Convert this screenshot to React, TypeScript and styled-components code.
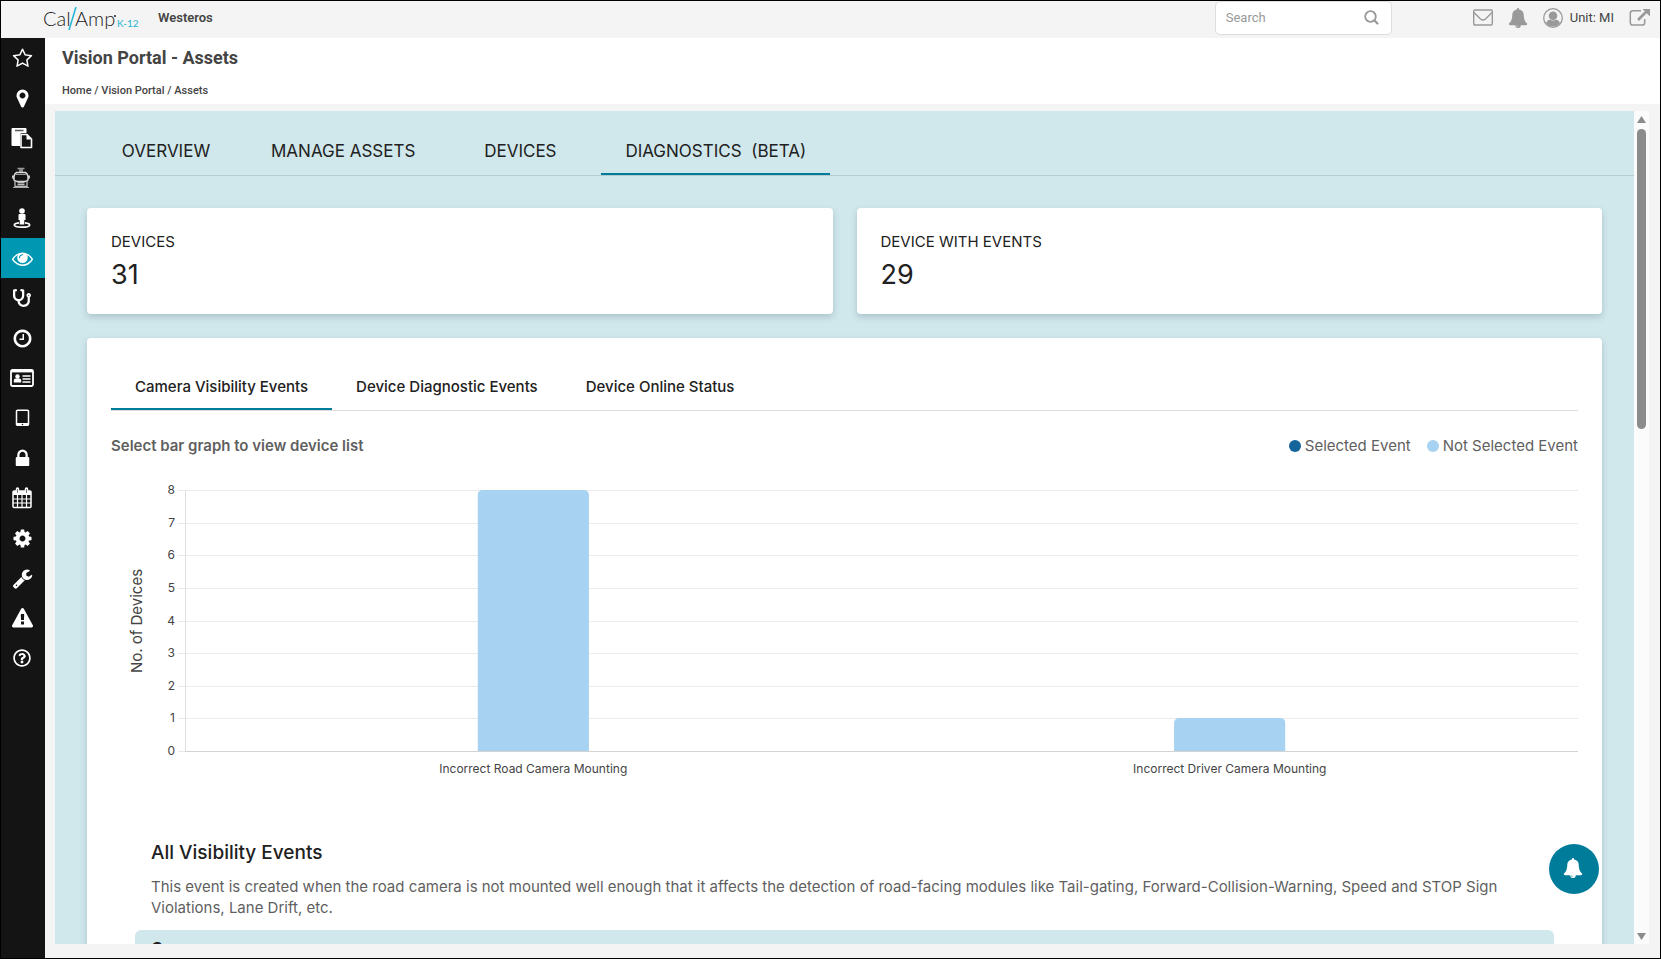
import React, { ReactNode } from "react";
import styled, { createGlobalStyle } from "styled-components";
import { FaStethoscope, FaRegQuestionCircle } from "react-icons/fa";

const GlobalStyle = createGlobalStyle`
  *, *::before, *::after { box-sizing: border-box; }
  body { margin: 0; background: #f4f4f4; font-family: Inter, "Liberation Sans", sans-serif; color: #212121; }
  h1, h2, h3, p, ul, ol, dl, dd { margin: 0; padding: 0; }
  ul, ol { list-style: none; }
  button, input { font: inherit; color: inherit; }
  a { color: inherit; text-decoration: none; }
`;

const Shell = styled.div`
  display: flex;
  flex-direction: column;
  height: 100vh;
  border: 1px solid #000;
  background: #f4f4f4;
`;

const TopBar = styled.header`
  display: flex;
  align-items: center;
  flex: none;
  height: 37px;
  padding: 0 9px 4px 42px;
  font-family: Roboto, "Liberation Sans", sans-serif;
  font-size: 13px;
  color: #444;
`;

const LogoLink = styled.a`
  display: flex;
  height: 30px;
`;

const OrgName = styled.span`
  margin-left: 18px;
  font-weight: 600;
`;

const SearchBox = styled.label`
  display: flex;
  align-items: center;
  width: 177px;
  height: 34px;
  margin-left: auto;
  padding: 0 12px 0 10px;
  border: 1px solid #ddd;
  border-radius: 5px;
  background: #fff;
  color: #999;
`;

const SearchInput = styled.input`
  flex: 1;
  min-width: 0;
  padding: 0;
  border: 0;
  outline: 0;
  background: none;
  &::placeholder { color: #999; opacity: 1; }
`;

const TopActions = styled.nav`
  display: flex;
  align-items: center;
  margin-left: 81px;
  gap: 15px;
`;

const IconButton = styled.button`
  display: flex;
  align-items: center;
  gap: 7px;
  padding: 0;
  border: 0;
  background: none;
  color: #444;
  cursor: pointer;
  svg { color: #999; }
`;

const Body = styled.div`
  display: flex;
  flex: 1;
  min-height: 0;
`;

const Sidebar = styled.nav`
  flex: none;
  width: 44px;
  background: #141414;
`;

const SideLink = styled.a<{ $active?: boolean }>`
  display: flex;
  align-items: center;
  justify-content: center;
  height: 40px;
  padding-right: 2px;
  background: ${(p) => (p.$active ? "#0097b2" : "transparent")};
  color: #fff;
`;

const Page = styled.div`
  display: flex;
  flex-direction: column;
  flex: 1;
  min-width: 0;
`;

const PageHeader = styled.div`
  flex: none;
  height: 66px;
  padding: 9px 17px 0;
  background: #fff;
  font-family: Roboto, "Liberation Sans", sans-serif;
  color: #444;
`;

const PageTitle = styled.h1`
  font-size: 18px;
  line-height: 22px;
  font-weight: 700;
`;

const Breadcrumb = styled.nav`
  margin-top: 14px;
  font-size: 11px;
  line-height: 16px;
  font-weight: 500;
`;

const Frame = styled.div`
  position: relative;
  display: flex;
  flex: 1;
  min-height: 0;
  margin: 7px 11px 14px 10px;
`;

const Content = styled.main`
  flex: 1;
  min-width: 0;
  overflow: hidden;
  background: #d0e7eb;
`;

const TabList = styled.div<{ $main?: boolean }>`
  display: flex;
  gap: ${(p) => (p.$main ? "1px" : "0")};
  padding: ${(p) => (p.$main ? "15px 31px 0" : "0")};
  border-bottom: 1px solid ${(p) => (p.$main ? "#b7cbcf" : "#dedede")};
`;

const Tab = styled.button<{ $main?: boolean; $active?: boolean }>`
  min-width: ${(p) => (p.$main ? "160px" : "90px")};
  height: ${(p) => (p.$main ? "49px" : "48px")};
  padding: 2px 24px 0;
  border: 0;
  border-bottom: 2px solid ${(p) => (p.$active ? "#007c9b" : "transparent")};
  background: none;
  font-size: ${(p) => (p.$main ? "17px" : "15px")};
  font-weight: ${(p) => (p.$main ? 400 : 500)};
  white-space: pre;
  color: #212121;
  cursor: pointer;
`;

const Sections = styled.div`
  display: grid;
  gap: 24px;
  padding: 32px;
`;

const StatRow = styled.dl`
  display: grid;
  grid-template-columns: 1fr 1fr;
  gap: 24px;
`;

const Card = styled.div`
  padding: 24px;
  border-radius: 4px;
  background: #fff;
  box-shadow: 0 3px 6px rgba(60, 90, 110, 0.25);
`;

const StatCard = styled(Card)`
  height: 106px;
`;

const StatLabel = styled.dt`
  font-size: 15px;
  line-height: 20px;
`;

const StatValue = styled.dd`
  margin-top: 5px;
  font-size: 27px;
  line-height: 36px;
  font-weight: 400;
`;

const ChartHeader = styled.div`
  display: flex;
  align-items: center;
  justify-content: space-between;
  margin-top: 24px;
  font-size: 15px;
  line-height: 22px;
  color: #5f5f5f;
`;

const ChartTitle = styled.h2`
  font-size: 15px;
  font-weight: 600;
`;

const Legend = styled.ul`
  display: flex;
  gap: 16px;
`;

const LegendItem = styled.li<{ $color: string }>`
  display: flex;
  align-items: center;
  gap: 4px;
  &::before {
    content: "";
    width: 12px;
    height: 12px;
    border-radius: 50%;
    background: ${(p) => p.$color};
  }
`;

const ChartRow = styled.div`
  display: flex;
  height: 310px;
  margin-top: 23px;
`;

const AxisArea = styled.svg`
  flex: none;
  width: 74px;
  height: 100%;
  overflow: visible;
`;

const PlotArea = styled.svg`
  flex: 1;
  min-width: 0;
  height: 100%;
  overflow: visible;
`;

const EventList = styled.section`
  margin: 51px 24px 0;
`;

const EventIntro = styled.div`
  padding: 0 16px;
`;

const EventTitle = styled.h2`
  font-size: 19px;
  line-height: 24px;
  font-weight: 500;
`;

const EventText = styled.p`
  margin-top: 11px;
  font-size: 15px;
  line-height: 21px;
  color: #5f5f5f;
`;

const EventTable = styled.table`
  width: 100%;
  margin-top: 12px;
  border-collapse: separate;
  border-spacing: 0;
`;

const EventHead = styled.th`
  height: 36px;
  padding: 8px 16px;
  border-radius: 6px 6px 0 0;
  background: #d0e7eb;
  text-align: left;
  font-size: 16px;
  line-height: 20px;
  font-weight: 700;
`;

const ScrollTrack = styled.div`
  display: flex;
  flex-direction: column;
  align-items: center;
  flex: none;
  width: 15px;
  padding: 5px 0 4px;
  background: #fbfbfb;
  color: #8b8b8b;
`;

const ScrollThumb = styled.div`
  width: 9px;
  height: 300px;
  margin: 6px 0 auto;
  border-radius: 5px;
  background: #8b8b8b;
`;

const AlertButton = styled.button`
  position: absolute;
  right: 50px;
  bottom: 50px;
  display: flex;
  align-items: center;
  justify-content: center;
  width: 50px;
  height: 50px;
  padding: 0 2px 2px 0;
  border: 0;
  border-radius: 50%;
  background: #007c9b;
  color: #fff;
  cursor: pointer;
`;

const Glyph = ({ d, size = 21 }: { d: string; size?: number }) => (
  <svg width={size} height={size} viewBox="0 0 1792 1792" fill="currentColor" aria-hidden="true">
    <path d={d} />
  </svg>
);

const paths = {
  star: "M1201 1004l306-297-422-62-189-382-189 382-422 62 306 297-73 421 378-199 377 199zm527-357q0 22-26 48l-363 354 86 500q1 7 1 20 0 50-41 50-19 0-40-12l-449-236-449 236q-22 12-40 12-21 0-31.5-14.5t-10.5-35.5q0-6 2-20l86-500-364-354q-25-27-25-48 0-37 56-46l502-73 225-455q19-41 49-41t49 41l225 455 502 73q56 9 56 46z",
  marker: "M1152 640q0-106-75-181t-181-75-181 75-75 181 75 181 181 75 181-75 75-181zm256 0q0 109-33 179l-364 774q-16 33-47.5 52t-67.5 19-67.5-19-46.5-52l-365-774q-33-70-33-179 0-212 150-362t362-150 362 150 150 362z",
  eye: "M1664 960q-152-236-381-353 61 104 61 225 0 185-131.5 316.5t-316.5 131.5-316.5-131.5-131.5-316.5q0-121 61-225-229 117-381 353 133 205 333.5 326.5t434.5 121.5 434.5-121.5 333.5-326.5zm-720-384q0-20-14-34t-34-14q-125 0-214.5 89.5t-89.5 214.5q0 20 14 34t34 14 34-14 14-34q0-86 61-147t147-61q20 0 34-14t14-34zm848 384q0 34-20 69-140 230-376.5 368.5t-499.5 138.5-499.5-139-376.5-368q-20-35-20-69t20-69q140-229 376.5-368t499.5-139 499.5 139 376.5 368q20 35 20 69z",
  clock: "M1024 544v448q0 14-9 23t-23 9h-320q-14 0-23-9t-9-23v-64q0-14 9-23t23-9h224v-352q0-14 9-23t23-9h64q14 0 23 9t9 23zm416 352q0-148-73-273t-198-198-273-73-273 73-198 198-73 273 73 273 198 198 273 73 273-73 198-198 73-273zm224 0q0 209-103 385.5t-279.5 279.5-385.5 103-385.5-103-279.5-279.5-103-385.5 103-385.5 279.5-279.5 385.5-103 385.5 103 279.5 279.5 103 385.5z",
  tablet: "M960 1408q0-26-19-45t-45-19-45 19-19 45 19 45 45 19 45-19 19-45zm384-160v-960q0-13-9.5-22.5t-22.5-9.5h-832q-13 0-22.5 9.5t-9.5 22.5v960q0 13 9.500 22.500t22.500 9.500h832q13 0 22.500-9.500t9.500-22.500zm128-960v1088q0 66-47 113t-113 47h-832q-66 0-113-47t-47-113v-1088q0-66 47-113t113-47h832q66 0 113 47t47 113z",
  lock: "M640 768h512v-192q0-106-75-181t-181-75-181 75-75 181v192zm832 96v576q0 40-28 68t-68 28h-960q-40 0-68-28t-28-68v-576q0-40 28-68t68-28h32v-192q0-184 132-316t316-132 316 132 132 316v192h32q40 0 68 28t28 68z",
  cog: "M1152 896q0-106-75-181t-181-75-181 75-75 181 75 181 181 75 181-75 75-181zm512-109v222q0 12-8 23t-20 13l-185 28q-19 54-39 91 35 50 107 138 10 12 10 25t-9 23q-27 37-99 108t-94 71q-12 0-26-9l-138-108q-44 23-91 38-16 136-29 186-7 28-36 28h-222q-14 0-24.5-8.5t-11.5-21.5l-28-184q-49-16-90-37l-141 107q-10 9-25 9-14 0-25-11-126-114-165-168-7-10-7-23 0-12 8-23 15-21 51-66.5t54-70.5q-27-50-41-99l-183-27q-13-2-21-12.5t-8-23.5v-222q0-12 8-23t19-13l186-28q14-46 39-92-40-57-107-138-10-12-10-24 0-10 9-23 26-36 98.5-107.5t94.5-71.5q13 0 26 10l138 107q44-23 91-38 16-136 29-186 7-28 36-28h222q14 0 24.5 8.5t11.5 21.5l28 184q49 16 90 37l142-107q9-9 24-9 13 0 25 10 129 119 165 170 7 8 7 22 0 12-8 23-15 21-51 66.5t-54 70.5q26 50 41 98l183 28q13 2 21 12.5t8 23.5z",
  wrench: "M448 1472q0-26-19-45t-45-19-45 19-19 45 19 45 45 19 45-19 19-45zm644-420l-682 682q-37 37-90 37-52 0-91-37l-106-108q-38-36-38-90 0-53 38-91l681-681q39 98 114.5 173.5t173.5 114.5zm634-435q0 39-23 106-47 134-164.5 217.5t-258.5 83.5q-185 0-316.5-131.5t-131.5-316.5 131.5-316.5 316.5-131.5q58 0 121.5 16.5t107.5 46.5q16 11 16 28t-16 28l-293 169v224l193 107q5-3 79-48.5t135.5-81 70.5-35.5q15 0 23.5 10t8.5 25z",
  warning: "M1024 1375v-190q0-14-9.5-23.5t-22.5-9.5h-192q-13 0-22.5 9.5t-9.5 23.5v190q0 14 9.5 23.5t22.5 9.5h192q13 0 22.5-9.5t9.5-23.5zm-2-374l18-459q0-12-10-19-13-11-24-11h-220q-11 0-24 11-10 7-10 21l17 457q0 10 10 16.5t24 6.5h185q14 0 23.5-6.5t10.5-16.5zm-14-934l768 1408q35 63-2 126-17 29-46.5 46t-63.5 17h-1536q-34 0-63.5-17t-46.5-46q-37-63-2-126l768-1408q17-31 47-49t65-18 65 18 47 49z",
  bell: "M912 1696q0-16-16-16-59 0-101.5-42.5t-42.5-101.5q0-16-16-16t-16 16q0 73 51.5 124.5t124.5 51.5q16 0 16-16zm816-288q0 52-38 90t-90 38h-448q0 106-75 181t-181 75-181-75-75-181h-448q-52 0-90-38t-38-90q50-42 91-88t85-119.5 74.5-158.5 50-206 19.5-260q0-152 117-282.5t307-158.5q-8-19-8-39 0-40 28-68t68-28 68 28 28 68q0 20-8 39 190 28 307 158.5t117 282.5q0 139 19.5 260t50 206 74.5 158.5 85 119.5 91 88z",
};

const SearchIcon = () => (
  <svg width="15" height="15" viewBox="0 0 15 15" fill="none" stroke="currentColor" aria-hidden="true">
    <circle cx="6.500" cy="6.500" r="5.300" strokeWidth="1.800" />
    <path d="M10.500 10.500l3 3" strokeWidth="2.200" strokeLinecap="round" />
  </svg>
);

const ClipboardIcon = () => (
  <svg width="22" height="22" viewBox="0 0 22 22" aria-hidden="true">
    <path d="M1.500 1h13q1 0 1 1v4h-4.500q-2 0-2 2v11h-7.500q-1 0-1-1v-16q0-1 1-1z" fill="#fff" />
    <path d="M4 3.500h8.500" stroke="#555" strokeWidth="1.500" />
    <path d="M10 7.500h6l4.500 4.500v8.500h-10.500z" fill="#141414" stroke="#fff" strokeWidth="1.600" strokeLinejoin="round" />
    <path d="M15.500 7.500v5h5z" fill="#fff" />
  </svg>
);

const BusIcon = () => (
  <svg width="22" height="22" viewBox="0 0 22 22" fill="none" stroke="#ddd" aria-hidden="true">
    <path d="M6.500 1.500h7" stroke="#999" strokeWidth="1.500" />
    <path d="M10 2v3" stroke="#888" strokeWidth="4" />
    <path d="M5.500 5.500h9q2 1 2.500 4v3.500q-1.500 1.500-3.500 1.500h-7q-2 0-3.500-1.500v-3.500q.5-3 2.500-4z" strokeWidth="1.500" />
    <path d="M5 7.500h10" stroke="#999" />
    <path d="M2 8.500v3M18 8.500v3" strokeWidth="1.800" />
    <path d="M4 13v6.500h12v-6.500M6.500 15.500h7M6.500 17.500h7" stroke="#bbb" strokeWidth="1.300" />
    <path d="M2 20.500h16" stroke="#aaa" />
  </svg>
);

const StreetViewIcon = () => (
  <svg width="20" height="22" viewBox="0 0 20 22" fill="#fff" aria-hidden="true">
    <circle cx="10" cy="4" r="2.800" />
    <path d="M7.500 7h5q1 0 1 1v5h-1.200v4.500h-4.600v-4.500h-1.200v-5q0-1 1-1z" />
    <path d="M7 15.800c-3 .4-4.700 1.200-4.700 2.200 0 1.300 3.300 2.200 7.700 2.200s7.700-.9 7.700-2.200c0-1-1.700-1.800-4.700-2.200" fill="none" stroke="#fff" strokeWidth="1.700" />
  </svg>
);

const IdCardIcon = () => (
  <svg width="24" height="18" viewBox="0 0 24 18" aria-hidden="true">
    <rect x="1" y="1" width="22" height="16" rx="1.500" fill="none" stroke="#fff" strokeWidth="1.800" />
    <path d="M1 2.200h22" stroke="#fff" strokeWidth="2.400" />
    <circle cx="7.500" cy="7.500" r="2.200" fill="#fff" />
    <path d="M3.800 13.500v-2q0-2 2-2h3.400q2 0 2 2v2z" fill="#fff" />
    <path d="M12.500 7h8M12.500 10h8M12.500 13h8" stroke="#fff" strokeWidth="1.500" />
  </svg>
);

const CalendarIcon = () => (
  <svg width="20" height="22" viewBox="0 0 20 22" fill="none" stroke="#fff" aria-hidden="true">
    <rect x="1" y="4" width="18" height="16.500" rx="1" strokeWidth="1.500" />
    <path d="M1 6h18" strokeWidth="4" />
    <path d="M1 12h18M1 16h18M5.500 8v12M10 8v12M14.500 8v12" strokeWidth="1.200" />
    <path d="M5.500 2v3.500M14.500 2v3.500" strokeWidth="3.500" strokeLinecap="round" />
    <path d="M5.500 2.500v3M14.500 2.500v3" stroke="#777" strokeLinecap="round" />
  </svg>
);

const EnvelopeIcon = () => (
  <svg width="20" height="17" viewBox="0 0 20 17" fill="none" stroke="currentColor" strokeWidth="1.400" aria-hidden="true">
    <rect x=".7" y="1" width="18.600" height="15" rx="1" />
    <path d="M1 3.500l6.500 6.500q2.500 2 5 0l6.500-6.500" />
  </svg>
);

const UserIcon = () => (
  <svg width="20" height="20" viewBox="0 0 20 20" aria-hidden="true">
    <circle cx="10" cy="10" r="9.300" fill="none" stroke="currentColor" strokeWidth="1.300" />
    <circle cx="10" cy="7.800" r="4.300" fill="currentColor" />
    <path d="M3 15q1.300-3.200 4-3.600 3 2 6 0 2.700.4 4 3.600-2.700 3.500-7 3.500t-7-3.500z" fill="currentColor" />
  </svg>
);

const ExternalIcon = () => (
  <svg width="22" height="20" viewBox="0 0 22 20" fill="none" stroke="currentColor" aria-hidden="true">
    <path d="M12 2.700h-8q-2.700 0-2.700 2.700v9q0 2.700 2.700 2.700h9q2.700 0 2.700-2.700v-3.400" strokeWidth="1.500" />
    <path d="M9 12l9.500-9.500" strokeWidth="2.600" />
    <path d="M13.500 1h7.500v7.500z" fill="currentColor" stroke="none" />
  </svg>
);

const Logo = () => (
  <svg width="97" height="30" viewBox="0 0 97 30" role="img" aria-label="CalAmp K-12">
    <text x="0" y="23" fontFamily="Lato, sans-serif" fontWeight="300" fontSize="20" fill="#222">Cal</text>
    <path d="M33 4l-7 23" stroke="#1fb5d0" strokeWidth="1.500" />
    <text x="32" y="23" fontFamily="Lato, sans-serif" fontWeight="300" fontSize="20" fill="#222">Amp</text>
    <circle cx="72" cy="13" r="1" fill="#222" />
    <text x="74" y="24" fontFamily="Lato, sans-serif" fontSize="10" fill="#1fb5d0">K-12</text>
  </svg>
);

const sideItems: { label: string; icon: ReactNode; active?: boolean }[] = [
  { label: "Favorites", icon: <Glyph d={paths.star} /> },
  { label: "Map", icon: <Glyph d={paths.marker} /> },
  { label: "Reports", icon: <ClipboardIcon /> },
  { label: "Buses", icon: <BusIcon /> },
  { label: "Riders", icon: <StreetViewIcon /> },
  { label: "Vision", icon: <Glyph d={paths.eye} />, active: true },
  { label: "Diagnostics", icon: <FaStethoscope size={18} /> },
  { label: "Time", icon: <Glyph d={paths.clock} /> },
  { label: "Drivers", icon: <IdCardIcon /> },
  { label: "Tablets", icon: <Glyph d={paths.tablet} /> },
  { label: "Security", icon: <Glyph d={paths.lock} /> },
  { label: "Calendar", icon: <CalendarIcon /> },
  { label: "Settings", icon: <Glyph d={paths.cog} /> },
  { label: "Maintenance", icon: <Glyph d={paths.wrench} /> },
  { label: "Alerts", icon: <Glyph d={paths.warning} /> },
  { label: "Help", icon: <FaRegQuestionCircle size={18} /> },
];

const mainTabs = ["OVERVIEW", "MANAGE ASSETS", "DEVICES", "DIAGNOSTICS  (BETA)"];
const eventTabs = ["Camera Visibility Events", "Device Diagnostic Events", "Device Online Status"];
const stats = [
  { label: "DEVICES", value: 31 },
  { label: "DEVICE WITH EVENTS", value: 29 },
];
const bars = [
  { label: "Incorrect Road Camera Mounting", value: 8 },
  { label: "Incorrect Driver Camera Mounting", value: 1 },
];

const MAX = 8;
const PLOT_HEIGHT = 261;
const yFor = (v: number) => Math.round(PLOT_HEIGHT - (v / MAX) * PLOT_HEIGHT) + 10;

const BarChart = () => {
  const ticks = Array.from({ length: MAX + 1 }, (_, i) => i);
  const slot = 100 / bars.length;
  return (
    <ChartRow>
      <AxisArea aria-hidden="true">
        <text transform="translate(31 141) rotate(-90)" textAnchor="middle" fontSize="15" fill="#444">
          No. of Devices
        </text>
        {ticks.map((t) => (
          <text key={t} x="64" y={yFor(t) + 4} textAnchor="end" fontSize="12" fill="#444">{t}</text>
        ))}
      </AxisArea>
      <PlotArea role="img" aria-label="Number of devices per event">
        {ticks.map((t) => (
          <g key={t} shapeRendering="crispEdges">
            <rect x="-7" y={yFor(t)} width="7" height="1" fill="#e9e9e9" />
            <rect x="0" y={yFor(t)} width="100%" height="1" fill={t === 0 ? "#d3d3d3" : "#ececec"} />
          </g>
        ))}
        <rect x="0" y={yFor(MAX)} width="1" height={PLOT_HEIGHT} fill="#e0e0e0" />
        {bars.map((b, i) => (
          <g key={b.label}>
            <svg x={`${slot * i + 21}%`} y={yFor(b.value)} width="8%" height={yFor(0) - yFor(b.value)}>
              <rect width="100%" height={PLOT_HEIGHT + 10} rx="5" fill="#a7d2f1" />
            </svg>
            <text x={`${slot * i + 25}%`} y="293" textAnchor="middle" fontSize="12" fill="#444">{b.label}</text>
          </g>
        ))}
      </PlotArea>
    </ChartRow>
  );
};

export default function App() {
  return (
    <>
      <GlobalStyle />
      <Shell>
        <TopBar>
          <LogoLink href="#"><Logo /></LogoLink>
          <OrgName>Westeros</OrgName>
          <SearchBox>
            <SearchInput type="search" placeholder="Search" aria-label="Search" />
            <SearchIcon />
          </SearchBox>
          <TopActions>
            <IconButton aria-label="Messages"><EnvelopeIcon /></IconButton>
            <IconButton aria-label="Notifications"><Glyph d={paths.bell} size={20} /></IconButton>
            <IconButton><UserIcon />Unit: MI</IconButton>
            <IconButton aria-label="Open in new window"><ExternalIcon /></IconButton>
          </TopActions>
        </TopBar>
        <Body>
          <Sidebar aria-label="Main">
            {sideItems.map((s) => (
              <SideLink key={s.label} href="#" aria-label={s.label} $active={s.active}>{s.icon}</SideLink>
            ))}
          </Sidebar>
          <Page>
            <PageHeader>
              <PageTitle>Vision Portal - Assets</PageTitle>
              <Breadcrumb aria-label="Breadcrumb">
                <a href="#">Home</a> / <a href="#">Vision Portal</a> / <a href="#">Assets</a>
              </Breadcrumb>
            </PageHeader>
            <Frame>
              <Content>
                <TabList $main role="tablist">
                  {mainTabs.map((t, i) => (
                    <Tab key={t} $main role="tab" $active={i === 3} aria-selected={i === 3}>{t}</Tab>
                  ))}
                </TabList>
                <Sections>
                  <StatRow>
                    {stats.map((s) => (
                      <StatCard key={s.label}>
                        <StatLabel>{s.label}</StatLabel>
                        <StatValue>{s.value}</StatValue>
                      </StatCard>
                    ))}
                  </StatRow>
                  <Card>
                    <TabList role="tablist">
                      {eventTabs.map((t, i) => (
                        <Tab key={t} role="tab" $active={i === 0} aria-selected={i === 0}>{t}</Tab>
                      ))}
                    </TabList>
                    <ChartHeader>
                      <ChartTitle>Select bar graph to view device list</ChartTitle>
                      <Legend>
                        <LegendItem $color="#14659c">Selected Event</LegendItem>
                        <LegendItem $color="#a7d2f1">Not Selected Event</LegendItem>
                      </Legend>
                    </ChartHeader>
                    <BarChart />
                    <EventList>
                      <EventIntro>
                        <EventTitle>All Visibility Events</EventTitle>
                        <EventText>
                          This event is created when the road camera is not mounted well enough that it affects the
                          detection of road-facing modules like Tail-gating, Forward-Collision-Warning, Speed and STOP
                          Sign Violations, Lane Drift, etc.
                        </EventText>
                      </EventIntro>
                      <EventTable>
                        <thead><tr><EventHead>Camera</EventHead></tr></thead>
                      </EventTable>
                    </EventList>
                  </Card>
                </Sections>
              </Content>
              <ScrollTrack aria-hidden="true">
                <svg width="9" height="7" viewBox="0 0 9 7"><path d="M4.500 0l4.500 7h-9z" fill="currentColor" /></svg>
                <ScrollThumb />
                <svg width="9" height="7" viewBox="0 0 9 7"><path d="M4.500 7l4.500-7h-9z" fill="currentColor" /></svg>
              </ScrollTrack>
              <AlertButton aria-label="Alerts"><Glyph d={paths.bell} size={20} /></AlertButton>
            </Frame>
          </Page>
        </Body>
      </Shell>
    </>
  );
}
